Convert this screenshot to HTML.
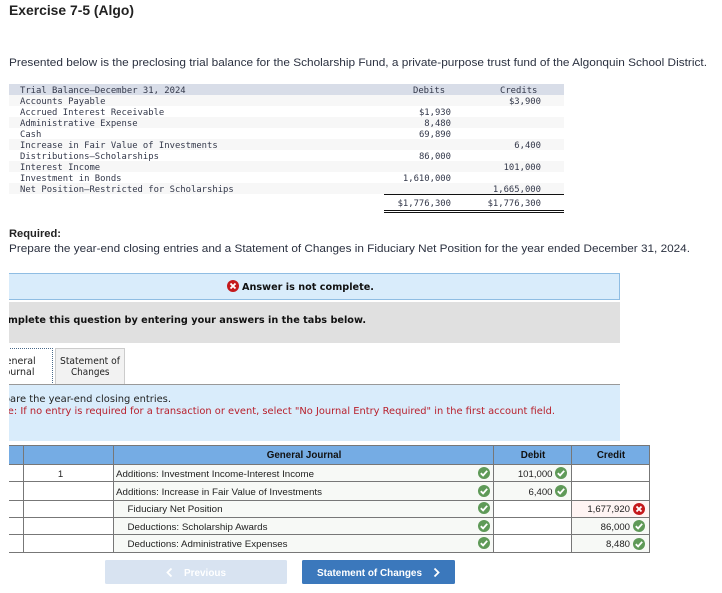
<!DOCTYPE html>
<html><head><meta charset="utf-8"><style>
html,body{margin:0;padding:0;background:#fff;width:722px;height:593px;overflow:hidden}
svg{display:block}
.m{font:8.9px "DejaVu Sans Mono",monospace;fill:#33384a}
.p{font:11px "Liberation Sans",sans-serif;fill:#2b3140}
.d{font:9.5px "DejaVu Sans",sans-serif;fill:#222}
.db{font:bold 9.5px "DejaVu Sans",sans-serif;fill:#111}
.a{font:9.6px "Liberation Sans",sans-serif;fill:#222}
.t{font:9.5px "DejaVu Sans",sans-serif;fill:#222}
.ab{font:bold 9.8px "Liberation Sans",sans-serif;fill:#111}
</style></head><body>
<svg width="722" height="593" viewBox="0 0 722 593" xmlns="http://www.w3.org/2000/svg">
<defs>
<clipPath id="c"><rect x="9" y="0" width="713" height="593"/></clipPath>
<g id="ok"><circle r="6" fill="#5f9a58"/><path d="M-3.200 0.200L-0.900 2.400L3.200-2.200" fill="none" stroke="#fff" stroke-width="1.800"/></g>
<g id="no"><circle r="6" fill="#c4191c"/><path d="M-2.500-2.500L2.500 2.500M2.500-2.500L-2.500 2.500" fill="none" stroke="#fff" stroke-width="1.900"/></g>
</defs>

<text x="9" y="15" textLength="125" lengthAdjust="spacingAndGlyphs" style="font:bold 13.500px 'Liberation Sans',sans-serif;fill:#222">Exercise 7-5 (Algo)</text>
<text x="9" y="66" textLength="698" lengthAdjust="spacingAndGlyphs" class="p">Presented below is the preclosing trial balance for the Scholarship Fund, a private-purpose trust fund of the Algonquin School District.</text>

<rect x="9" y="84" width="555" height="11" fill="#d8dde8"/>
<rect x="9" y="95" width="555" height="11" fill="#f7f7f7"/>
<rect x="9" y="117" width="555" height="11" fill="#f7f7f7"/>
<rect x="9" y="139" width="555" height="11" fill="#f7f7f7"/>
<rect x="9" y="161" width="555" height="11" fill="#f7f7f7"/>
<rect x="9" y="183" width="555" height="11" fill="#f7f7f7"/>
<g>
<text class="m" x="20" y="93">Trial Balance—December 31, 2024</text>
<text class="m" x="20" y="104">Accounts Payable</text>
<text class="m" x="20" y="115">Accrued Interest Receivable</text>
<text class="m" x="20" y="126">Administrative Expense</text>
<text class="m" x="20" y="137">Cash</text>
<text class="m" x="20" y="148">Increase in Fair Value of Investments</text>
<text class="m" x="20" y="159">Distributions—Scholarships</text>
<text class="m" x="20" y="170">Interest Income</text>
<text class="m" x="20" y="181">Investment in Bonds</text>
<text class="m" x="20" y="192">Net Position—Restricted for Scholarships</text>
<text class="m" x="413" y="93">Debits</text>
<text class="m" x="500" y="93">Credits</text>
<g text-anchor="end">
<text class="m" x="541" y="104">$3,900</text>
<text class="m" x="451" y="115">$1,930</text>
<text class="m" x="451" y="126">8,480</text>
<text class="m" x="451" y="137">69,890</text>
<text class="m" x="541" y="148">6,400</text>
<text class="m" x="451" y="159">86,000</text>
<text class="m" x="541" y="170">101,000</text>
<text class="m" x="451" y="181">1,610,000</text>
<text class="m" x="541" y="192">1,665,000</text>
<text class="m" x="451" y="206">$1,776,300</text>
<text class="m" x="541" y="206">$1,776,300</text>
</g>
</g>
<rect x="384" y="194" width="180" height="1" fill="#111"/>
<rect x="384" y="210" width="180" height="1" fill="#111"/>
<rect x="384" y="212" width="180" height="1" fill="#111"/>

<text x="9" y="237" textLength="52" lengthAdjust="spacingAndGlyphs" style="font:bold 11px 'Liberation Sans',sans-serif;fill:#222">Required:</text>
<text x="9" y="252" textLength="681" lengthAdjust="spacingAndGlyphs" class="p">Prepare the year-end closing entries and a Statement of Changes in Fiduciary Net Position for the year ended December 31, 2024.</text>

<rect x="9" y="273" width="611" height="27" fill="#d9ecfb"/>
<path d="M9 273.500H619.500V299.500H9" fill="none" stroke="#8fbde3"/>
<use href="#no" x="233" y="286"/>
<text x="242" y="290" textLength="132" lengthAdjust="spacingAndGlyphs" class="db">Answer is not complete.</text>

<rect x="9" y="302" width="611" height="41" fill="#e0e0e0"/>
<g clip-path="url(#c)">
<text x="-6" y="323" textLength="372" lengthAdjust="spacingAndGlyphs" class="db">Complete this question by entering your answers in the tabs below.</text>
<path d="M0 348.500H52.500V384" fill="none" stroke="#4a6a8a" stroke-dasharray="1 1"/>
<text x="35.700" y="364" text-anchor="end" class="t">General</text>
<text x="34.500" y="375" text-anchor="end" class="t">Journal</text>
</g>
<rect x="55.500" y="348.500" width="69" height="36" fill="#f2f2f2" stroke="#ccc"/>
<text x="60" y="364" textLength="60" lengthAdjust="spacingAndGlyphs" class="t">Statement of</text>
<text x="71" y="375" textLength="38.500" lengthAdjust="spacingAndGlyphs" class="t">Changes</text>

<rect x="9" y="385" width="611" height="56" fill="#d9ecfb"/>
<rect x="9" y="384" width="611" height="1" fill="#999"/>
<g clip-path="url(#c)">
<text x="-12" y="402" textLength="183" lengthAdjust="spacingAndGlyphs" class="d">Prepare the year-end closing entries.</text>
<text x="-9.500" y="414" textLength="564.500" lengthAdjust="spacingAndGlyphs" class="d" style="fill:#b8202c">Note: If no entry is required for a transaction or event, select "No Journal Entry Required" in the first account field.</text>
</g>

<rect x="9" y="445" width="641" height="108" fill="#fff"/>
<rect x="9" y="445" width="641" height="19.500" fill="#75ace4"/>
<rect x="114" y="465" width="380" height="87" fill="#f7f9f6"/>
<rect x="494" y="465" width="78" height="35" fill="#f7f9f6"/>
<rect x="572" y="501" width="78" height="16" fill="#fff4f3"/>
<rect x="572" y="518" width="78" height="34" fill="#f7f9f6"/>
<path d="M9 445.500H649.500V552.500H9M9 464.500H650M9 481.500H650M9 500.500H650M9 517.500H650M9 534.500H650M23.500 445V553M113.500 445V553M493.500 445V553M571.500 445V553" fill="none" stroke="#777"/>
<text x="304" y="458" text-anchor="middle" class="ab">General Journal</text>
<text x="533" y="458" text-anchor="middle" class="ab">Debit</text>
<text x="611" y="458" text-anchor="middle" class="ab">Credit</text>
<text x="60.500" y="477" text-anchor="middle" class="a">1</text>
<text x="116" y="477" textLength="198" lengthAdjust="spacingAndGlyphs" class="a">Additions: Investment Income-Interest Income</text>
<text x="116" y="495" textLength="206" lengthAdjust="spacingAndGlyphs" class="a">Additions: Increase in Fair Value of Investments</text>
<text x="127.500" y="512" textLength="95" lengthAdjust="spacingAndGlyphs" class="a">Fiduciary Net Position</text>
<text x="127.500" y="530" textLength="140" lengthAdjust="spacingAndGlyphs" class="a">Deductions: Scholarship Awards</text>
<text x="127.500" y="547" textLength="160" lengthAdjust="spacingAndGlyphs" class="a">Deductions: Administrative Expenses</text>
<g text-anchor="end">
<text class="a" x="552.500" y="477">101,000</text>
<text class="a" x="552.500" y="495">6,400</text>
<text class="a" x="630" y="512">1,677,920</text>
<text class="a" x="630" y="530">86,000</text>
<text class="a" x="630" y="547">8,480</text>
</g>
<use href="#ok" x="484" y="473"/>
<use href="#ok" x="484" y="491"/>
<use href="#ok" x="484" y="508"/>
<use href="#ok" x="484" y="526"/>
<use href="#ok" x="484" y="543"/>
<use href="#ok" x="561" y="473"/>
<use href="#ok" x="561" y="491"/>
<use href="#no" x="639" y="509"/>
<use href="#ok" x="639" y="526"/>
<use href="#ok" x="639" y="544"/>

<rect x="105" y="560" width="182" height="24" rx="1.500" fill="#d8e3f1"/>
<path d="M171.500 568.500L167.500 572.500L171.500 576.500" fill="none" stroke="#fff" stroke-width="1.800"/>
<text x="184" y="576" textLength="42" lengthAdjust="spacingAndGlyphs" style="font:bold 10px 'Liberation Sans',sans-serif;fill:#fff">Previous</text>
<rect x="302" y="560" width="153" height="24" rx="1.500" fill="#3b78bc"/>
<text x="317" y="576" textLength="105" lengthAdjust="spacingAndGlyphs" style="font:bold 10px 'Liberation Sans',sans-serif;fill:#fff">Statement of Changes</text>
<path d="M434.500 568.500L438.500 572.500L434.500 576.500" fill="none" stroke="#fff" stroke-width="1.800"/>
</svg>
</body></html>
